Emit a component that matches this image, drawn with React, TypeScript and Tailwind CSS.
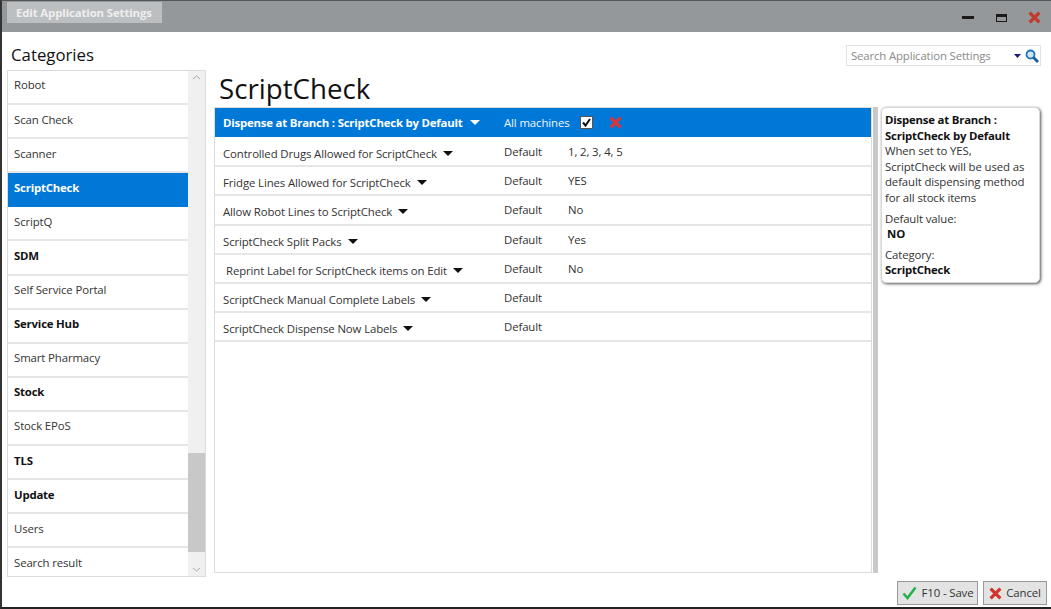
import type { ReactNode } from "react";

const categories = [
  { name: "Robot" },
  { name: "Scan Check" },
  { name: "Scanner" },
  { name: "ScriptCheck", active: true },
  { name: "ScriptQ" },
  { name: "SDM", bold: true },
  { name: "Self Service Portal" },
  { name: "Service Hub", bold: true },
  { name: "Smart Pharmacy" },
  { name: "Stock", bold: true },
  { name: "Stock EPoS" },
  { name: "TLS", bold: true },
  { name: "Update", bold: true },
  { name: "Users" },
  { name: "Search result" },
];

const settings = [
  { name: "Controlled Drugs Allowed for ScriptCheck", value: "1, 2, 3, 4, 5" },
  { name: "Fridge Lines Allowed for ScriptCheck", value: "YES" },
  { name: "Allow Robot Lines to ScriptCheck", value: "No" },
  { name: "ScriptCheck Split Packs", value: "Yes" },
  { name: "Reprint Label for ScriptCheck items on Edit", value: "No", indent: true },
  { name: "ScriptCheck Manual Complete Labels", value: "" },
  { name: "ScriptCheck Dispense Now Labels", value: "" },
];

function Caret({ className }: { className: string }) {
  return (
    <svg width="10" height="5" viewBox="0 0 10 5" className={className}>
      <path d="M0 0h10L5 5z" fill="currentColor" />
    </svg>
  );
}

function Cross({ size, className }: { size: number; className: string }) {
  return (
    <svg width={size} height={size} viewBox="0 0 12 12" className={className}>
      <path d="M1.5 1.5l9 9M10.5 1.5l-9 9" stroke="currentColor" strokeWidth="3" fill="none" />
    </svg>
  );
}

function Strong({ children }: { children: ReactNode }) {
  return <div className="font-bold tracking-[-0.2px] text-[#111]">{children}</div>;
}

export default function App() {
  return (
    <div className="flex h-[609px] w-[1051px] flex-col overflow-hidden border-t border-b-2 border-l-2 border-t-[#555] border-b-[#222] border-l-[#333] bg-white font-['Open_Sans',sans-serif] text-[11.4px] tracking-[-0.12px] text-[#333]">
      {/* title bar */}
      <div className="flex h-[31px] shrink-0 items-start justify-between bg-[#94989b]">
        <div className="ml-[5px] mt-[1px] flex h-[21px] w-[155px] items-center bg-[#bcbfc1] pl-[9px] font-bold text-[#eeeeee]">
          Edit Application Settings
        </div>
        <div className="mr-[10px] mt-[10px] flex items-center">
          <div className="h-[3px] w-[12px] bg-[#1a1a1a]" />
          <div className="ml-[22px] h-[8px] w-[11px] border border-t-[3px] border-[#1a1a1a]" />
          <Cross size={13} className="ml-[21px] text-[#c0392b]" />
        </div>
      </div>

      <div className="flex min-h-0 flex-1">
        {/* categories */}
        <div className="ml-[5px] w-[199px] shrink-0">
          <div className="flex h-[38px] items-end pb-[4px] pl-[4px] text-[16.8px] leading-[22px] tracking-normal text-[#111]">Categories</div>
          <div className="flex h-[507px] overflow-hidden border border-[#dcdcdc]">
            <div className="min-w-0 flex-1">
              {categories.map((c) => (
                <div
                  key={c.name}
                  className={`flex h-[34.1px] items-center border-b-2 pb-[4px] pl-[6px] ${
                    c.active
                      ? "border-[#0078d7] bg-[#0078d7] font-bold tracking-[-0.2px] text-white"
                      : c.bold
                        ? "border-[#e6e6e6] font-bold tracking-[-0.2px] text-[#111]"
                        : "border-[#e6e6e6]"
                  }`}
                >
                  {c.name}
                </div>
              ))}
            </div>
            <div className="flex w-[17px] shrink-0 flex-col bg-[#f0f0f0]">
              <div className="flex h-[382px] items-start justify-center pt-[4px] text-[#a8a8a8]">
                <svg width="9" height="5" viewBox="0 0 9 5"><path d="M1 4l3.5-3L8 4" stroke="currentColor" fill="none" /></svg>
              </div>
              <div className="h-[99px] bg-[#c8c8c8]" />
              <div className="flex flex-1 items-end justify-center pb-[4px] text-[#a8a8a8]">
                <svg width="9" height="5" viewBox="0 0 9 5"><path d="M1 1l3.5 3L8 1" stroke="currentColor" fill="none" /></svg>
              </div>
            </div>
          </div>
        </div>

        <div className="ml-[8px] flex min-w-0 flex-1 flex-col">
          {/* heading and search */}
          <div className="flex h-[75px] shrink-0 items-start justify-between">
            <div className="ml-[5px] mt-[38px] text-[27.7px] leading-[36px] tracking-normal text-[#111]">ScriptCheck</div>
            <div className="mr-[10px] mt-[13px] flex h-[21px] w-[195px] items-center justify-between border border-[#dfe3e8] pl-[4px] pr-[1px]">
              <span className="tracking-[-0.15px] text-[#8a8a8a]">Search Application Settings</span>
              <div className="flex items-center gap-[4px]">
                <svg width="7" height="4" viewBox="0 0 7 4" className="text-[#1a1a80]"><path d="M0 0h7L3.5 4z" fill="currentColor" /></svg>
                <svg width="14" height="14" viewBox="0 0 14 14">
                  <circle cx="5.5" cy="5.5" r="4" fill="#cfe4f5" stroke="#1f74b8" strokeWidth="1.8" />
                  <path d="M8.5 8.5L13 13" stroke="#1a5f99" strokeWidth="2.8" />
                </svg>
              </div>
            </div>
          </div>

          <div className="flex h-[466px] shrink-0">
            {/* settings grid */}
            <div className="w-[658px] shrink-0 border border-[#dcdcdc]">
              <div className="flex h-[30px] items-center border-b border-white bg-[#0078d7] text-white">
                <div className="flex w-[289px] shrink-0 items-center gap-[7px] pl-[8px] font-bold tracking-[-0.2px]">
                  <span>Dispense at Branch : ScriptCheck by Default</span>
                  <Caret className="text-white" />
                </div>
                <span className="text-[#f0f6fc]">All machines</span>
                <div className="ml-[11px] flex h-[13px] w-[13px] items-center justify-center border border-[#555] bg-white">
                  <svg width="11" height="11" viewBox="0 0 11 11"><path d="M2 5.5l2.5 3L9 2" stroke="#111" strokeWidth="2" fill="none" /></svg>
                </div>
                <Cross size={13} className="ml-[16px] text-[#d9363a]" />
              </div>
              {settings.map((s) => (
                <div key={s.name} className="flex h-[29.2px] items-center border-b-2 border-[#e6e6e6]">
                  <div className={`flex w-[289px] shrink-0 items-center gap-[6px] pt-[4px] ${s.indent ? "pl-[11px]" : "pl-[8px]"}`}>
                    <span>{s.name}</span>
                    <Caret className="text-[#111]" />
                  </div>
                  <span className="w-[64px] shrink-0">Default</span>
                  <span>{s.value}</span>
                </div>
              ))}
            </div>
            <div className="ml-[1px] w-[5px] shrink-0 bg-[#c8c8c8]" />
            {/* help card */}
            <div className="ml-[3px] h-[176px] w-[159px] shrink-0 rounded-[5px] border border-[#d8d8d8] bg-white px-[3px] pt-[4px] leading-[15.6px] shadow-[1px_1px_3px_#555]">
              <Strong>Dispense at Branch :<br />ScriptCheck by Default</Strong>
              <div>When set to YES,<br />ScriptCheck will be used as<br />default dispensing method<br />for all stock items</div>
              <div className="mt-[5px]">Default value:</div>
              <div className="pl-[2px] font-bold text-[#111]">NO</div>
              <div className="mt-[5px]">Category:</div>
              <Strong>ScriptCheck</Strong>
            </div>
          </div>

          {/* footer buttons */}
          <div className="flex flex-1 items-start justify-end gap-[5px] pr-[4px] pt-[8px]">
            <button className="flex h-[24px] w-[81px] items-center justify-center gap-[5px] border border-[#999] bg-[#e3e3e3]">
              <svg width="15" height="14" viewBox="0 0 15 14"><path d="M1.5 7.5l4 4.5L13.5 1.5" stroke="#22b04c" strokeWidth="2.5" fill="none" /></svg>
              <span>F10 - Save</span>
            </button>
            <button className="flex h-[24px] w-[64px] items-center justify-center gap-[4px] border border-[#999] bg-[#e3e3e3]">
              <Cross size={13} className="text-[#d0342c]" />
              <span>Cancel</span>
            </button>
          </div>
        </div>
      </div>
    </div>
  );
}
